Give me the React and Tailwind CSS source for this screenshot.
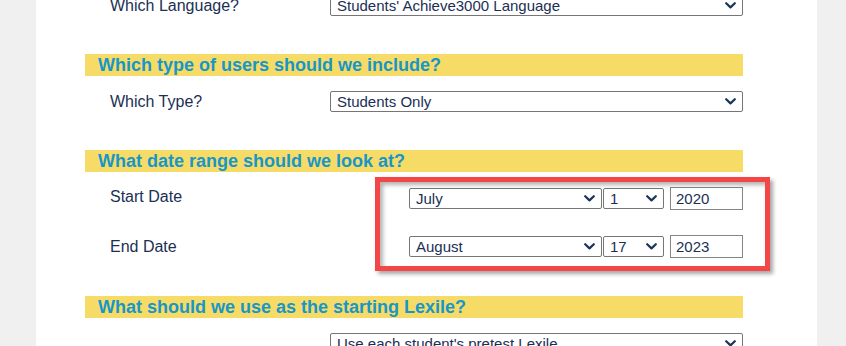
import React from "react";

const font = { fontFamily: '"Liberation Sans", Arial, sans-serif' };

function Chevron() {
  return (
    <svg width="11" height="7" viewBox="0 0 11 7" className="shrink-0">
      <path d="M1.2 1.2 L5.5 5.4 L9.8 1.2" fill="none" stroke="#1b355a" strokeWidth="2.2" strokeLinecap="round" strokeLinejoin="round" />
    </svg>
  );
}

function Select({ value, className = "" }) {
  return (
    <div className={`flex h-[21px] items-center justify-between rounded-[2px] border border-[#767676] bg-white pl-[6px] pr-[6px] text-[15px] leading-none text-[#1b2f55] ${className}`}>
      <span className="whitespace-nowrap">{value}</span>
      <Chevron />
    </div>
  );
}

function Heading({ children }) {
  return (
    <div className="flex h-[22px] items-center bg-[#f6dc66] pl-[13px] text-[18px] font-bold leading-none text-[#1896c9]">
      {children}
    </div>
  );
}

function Row({ label, children, labelClass = "" }) {
  return (
    <div className="flex h-[23px] items-center">
      <div className={`w-[245px] shrink-0 pl-[25px] text-[16px] leading-none text-[#1b2f55] ${labelClass}`}>{label}</div>
      <div className="flex flex-1 items-center">{children}</div>
    </div>
  );
}

function DateRow({ label, month, day, year, labelClass }) {
  return (
    <Row label={label} labelClass={labelClass}>
      <div className="ml-[79px] flex items-center">
        <Select value={month} className="w-[193px]" />
        <Select value={day} className="ml-[1px] w-[61px]" />
        <div className="ml-[6px] flex h-[23px] w-[73px] items-center border border-[#858585] bg-white pl-[5px] text-[15px] leading-none text-[#1b2f55]">
          {year}
        </div>
      </div>
    </Row>
  );
}

export default function App() {
  return (
    <div className="flex h-[346px] w-[846px] overflow-hidden bg-[#f0f0f0]" style={font}>
      <div className="ml-[36px] flex h-full w-[781px] flex-col bg-white">
        <div className="-mt-[6px] ml-[49px] w-[658px]">
          <Row label="Which Language?">
            <Select value="Students' Achieve3000 Language" className="w-full" />
          </Row>

          <div className="mt-[37px]">
            <Heading>Which type of users should we include?</Heading>
            <div className="mt-[14px]">
              <Row label="Which Type?">
                <Select value="Students Only" className="w-full" />
              </Row>
            </div>
          </div>

          <div className="relative mt-[37px]">
            <Heading>What date range should we look at?</Heading>
            <div className="mt-[15px] flex flex-col gap-[25px]">
              <DateRow label="Start Date" month="July" day="1" year="2020" labelClass="-mt-[3px]" />
              <DateRow label="End Date" month="August" day="17" year="2023" />
            </div>
            <div className="pointer-events-none absolute left-[290px] top-[27px] h-[94px] w-[395px] border-[5px] border-[#f44646] shadow-[3px_3px_4px_rgba(0,0,0,0.35),inset_3px_3px_4px_rgba(0,0,0,0.3)]" />
          </div>

          <div className="mt-[38px]">
            <Heading>What should we use as the starting Lexile?</Heading>
            <div className="mt-[14px]">
              <Row label="">
                <Select value="Use each student's pretest Lexile" className="w-full" />
              </Row>
            </div>
          </div>
        </div>
      </div>
    </div>
  );
}
